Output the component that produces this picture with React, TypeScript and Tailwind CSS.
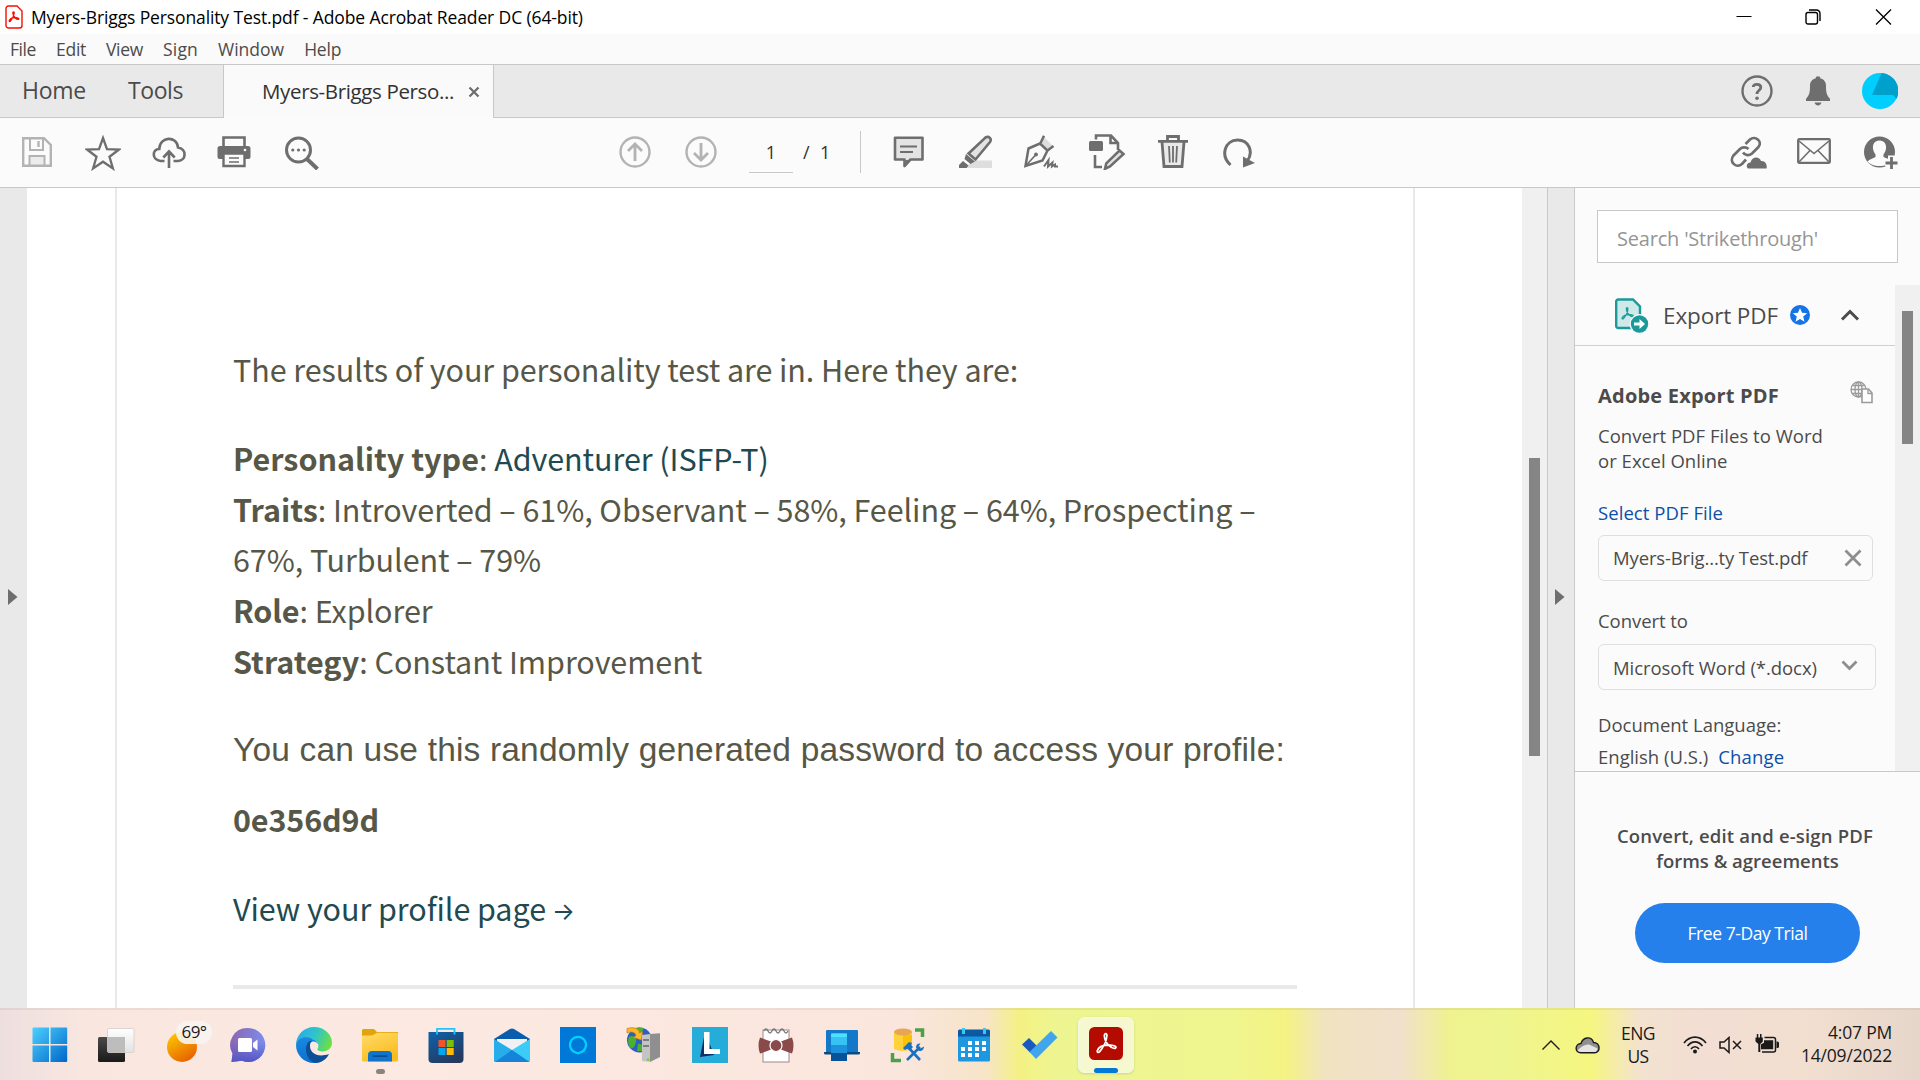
import type { ReactNode } from "react";

const D = "#6e6e6e";
const L = "#b3b3b3";

function T({ className = "", children }: { className?: string; children: ReactNode }) {
  return <span className={"whitespace-nowrap " + className}>{children}</span>;
}

function Slot({ children }: { children: ReactNode }) {
  return <div className="flex w-[66px] shrink-0 items-center justify-center">{children}</div>;
}

function Trefoil({ color, width }: { color: string; width: number }) {
  return (
    <path
      d="M2 19.500C4 14 10.500 13.200 16 13.500C21 13.800 23 15.500 21.500 16.800C18 18.500 10 12 9.500 3.500C9.500 0.500 12.500 0.500 12.300 3.500C12 9 8 16.500 4.500 20.500C3 22 1.300 21.500 2 19.500Z"
      fill="none"
      stroke={color}
      strokeWidth={width}
      strokeLinejoin="round"
    />
  );
}

function TitleBar() {
  return (
    <div className="flex h-[34px] items-center bg-white pl-[5px]">
      <svg width="18" height="24" viewBox="0 0 18 24">
        <path d="M3.500 1h8.500l5 5v14.500a2.500 2.500 0 0 1-2.500 2.500h-11a2.500 2.500 0 0 1-2.500-2.500v-17a2.500 2.500 0 0 1 2.500-2.500z" fill="#fff" stroke="#f40f02" strokeWidth="1.400" />
        <g transform="translate(3.300 6.200) scale(0.480)">
          <Trefoil color="#f40f02" width={2.8} />
        </g>
      </svg>
      <T className="ml-[8px] mt-[1px] text-[17.500px] tracking-[-0.120px] text-black">Myers-Briggs Personality Test.pdf - Adobe Acrobat Reader DC (64-bit)</T>
      <div className="ml-auto flex items-center pr-[28px] text-black">
        <svg width="16" height="16" viewBox="0 0 16 16"><path d="M0.500 7.500H15.500" stroke="currentColor" strokeWidth="1" /></svg>
        <svg className="ml-[53px]" width="16" height="16" viewBox="0 0 16 16" fill="none" stroke="currentColor" strokeWidth="1.400">
          <rect x="1" y="3.500" width="11.500" height="11.500" rx="2" />
          <path d="M4 1h7.500a3.500 3.500 0 0 1 3.500 3.500V12" />
        </svg>
        <svg className="ml-[54px]" width="17" height="16" viewBox="0 0 17 16"><path d="M1 0.500L16 15.500M16 0.500L1 15.500" stroke="currentColor" strokeWidth="1.300" /></svg>
      </div>
    </div>
  );
}

function MenuBar() {
  return (
    <div className="flex h-[31px] gap-[20px] border-b border-[#c8c8c8] bg-[#fafafa] pl-[10px] text-[17.500px] leading-[31px] text-[#4b4b4b]">
      <T className="tracking-[-0.430px]">File</T>
      <T className="tracking-[-0.270px]">Edit</T>
      <T className="tracking-[-0.310px]">View</T>
      <T className="tracking-[0.190px]">Sign</T>
      <T>Window</T>
      <T className="tracking-[-0.210px]">Help</T>
    </div>
  );
}

function TabBar() {
  return (
    <div className="flex h-[53px] bg-[#e9e9e9] text-[#4b4b4b]">
      <div className="flex w-[224px] items-center border-r border-b border-[#c8c8c8] pb-[2px] pl-[22px] text-[23px]">
        <T className="w-[106px] tracking-[-0.300px]">Home</T>
        <T className="tracking-[-0.420px]">Tools</T>
      </div>
      <div className="flex w-[269px] items-center bg-[#fafafa] pl-[38px] text-[#323232]">
        <T className="text-[20.500px] tracking-[-0.360px]">Myers-Briggs Perso...</T>
        <svg className="ml-[14px]" width="12" height="12" viewBox="0 0 12 12"><path d="M1.500 1.500L10.500 10.500M10.500 1.500L1.500 10.500" stroke={D} strokeWidth="2.300" /></svg>
      </div>
      <div className="flex flex-1 items-center justify-end border-b border-l border-[#c8c8c8] pr-[22px]">
        <svg width="32" height="32" viewBox="0 0 32 32" fill="none">
          <circle cx="16" cy="16" r="14.500" stroke={D} strokeWidth="2.400" />
          <path d="M12.200 12C12.500 8.500 19.800 8.300 19.800 12.500C19.800 15.300 16 15.300 16 19" stroke={D} strokeWidth="2.800" />
          <circle cx="16" cy="23.200" r="1.800" fill={D} />
        </svg>
        <svg className="ml-[32px]" width="26" height="30" viewBox="0 0 26 30" fill={D}>
          <path d="M10.800 2.200V1.500a1 1 0 0 1 1-1h2.400a1 1 0 0 1 1 1v0.700C19 3 21 6 21 9.500c0 7 .5 9.500 4 13.300V25H1v-2.200C4.500 19 5 16.500 5 9.500C5 6 7 3 10.800 2.200zM9.500 26.500h7c-.6 2-2 3-3.500 3s-2.900-1-3.500-3z" />
        </svg>
        <svg className="ml-[31px]" width="36" height="36" viewBox="0 0 36 36">
          <circle cx="18" cy="18" r="18" fill="#00ceff" />
          <path d="M19.500 0A18 18 0 0 1 34.500 26L31 22H10z" fill="#00a0cc" />
        </svg>
      </div>
    </div>
  );
}

function Toolbar() {
  return (
    <div className="flex h-[70px] border-b border-[#c8c8c8] bg-[#fbfbfb] pl-[4px]">
      <Slot>
        <svg className="mb-px" width="30" height="30" viewBox="0 0 30 30" fill="none" stroke={L}>
          <path d="M8 20h14v8H8z" fill="#ececec" stroke="none" />
          <path d="M1.200 1.200H22L28.800 8V28.800H1.200z" strokeWidth="2.400" />
          <path d="M8 1v12h13V1M7.500 29V19h15V29" strokeWidth="2" />
          <path d="M16.500 4v6" strokeWidth="2.400" />
        </svg>
      </Slot>
      <Slot>
        <svg width="36" height="36" viewBox="0 0 36 36" fill="none" stroke={D} strokeWidth="2.300">
          <path d="M18 3l4 11.200 12 .3-9.500 7.300 3.400 11.600L18 26.700l-9.900 6.700 3.400-11.600L2 14.500l12-.3z" />
        </svg>
      </Slot>
      <Slot>
        <svg width="34" height="32" viewBox="0 0 34 32" fill="none" stroke={D} strokeWidth="2.600">
          <path d="M12.500 24H8.500C-.5 23 0 12 7.300 12C7.500-1 25-1.500 26 10.500C35 12 34.500 23.500 26 24H21.500" />
          <path d="M17 31V15.500M11.300 20.500L17 14.500l5.700 6" />
        </svg>
      </Slot>
      <Slot>
        <svg className="mb-[2px] mr-[2px]" width="34" height="32" viewBox="0 0 34 32">
          <path d="M6.500 10V1.500h21V10" fill="none" stroke={D} strokeWidth="2.600" />
          <path d="M3 10h28a2.500 2.500 0 0 1 2.500 2.500V21a2 2 0 0 1-2 2H2.500a2 2 0 0 1-2-2v-8.500A2.500 2.500 0 0 1 3 10z" fill={D} />
          <circle cx="28" cy="14" r="1.300" fill="#fff" />
          <path d="M6.500 17.500h21V30h-21z" fill="#fbfbfb" stroke={D} strokeWidth="2.400" />
          <path d="M12 22h10M12 26h10" stroke={D} strokeWidth="1.600" />
        </svg>
      </Slot>
      <Slot>
        <svg className="ml-[2px]" width="34" height="34" viewBox="0 0 34 34">
          <circle cx="13.500" cy="14" r="12" fill="none" stroke={D} strokeWidth="3" />
          <path d="M22 23l10.500 10" stroke={D} strokeWidth="4" />
          <g fill={D}><circle cx="7.800" cy="14" r="1.600" /><circle cx="13.500" cy="14" r="1.600" /><circle cx="19.200" cy="14" r="1.600" /></g>
        </svg>
      </Slot>
      <div className="ml-[268px] flex pb-px">
        <Slot>
          <svg width="32" height="32" viewBox="0 0 32 32" fill="none" stroke={L} strokeWidth="2.400">
            <circle cx="16" cy="16" r="14.500" />
            <path d="M16 25V8.500M9 15l7-7 7 7" strokeWidth="2.800" />
          </svg>
        </Slot>
        <Slot>
          <svg width="32" height="32" viewBox="0 0 32 32" fill="none" stroke={L} strokeWidth="2.400">
            <circle cx="16" cy="16" r="14.500" />
            <path d="M16 7v16.500M9 17l7 7 7-7" strokeWidth="2.800" />
          </svg>
        </Slot>
      </div>
      <div className="ml-[15px] flex h-[55px] w-[44px] items-center justify-center border-b border-[#c8c8c8] pt-[14px] text-[18px] text-[#323232]">1</div>
      <div className="ml-[10px] flex items-center pb-px text-[18px] text-[#323232]">
        <span className="w-[17px]">/</span>
        <span>1</span>
      </div>
      <div className="ml-[30px] mt-[13px] h-[42px] w-px bg-[#c8c8c8]" />
      <div className="ml-[15px] flex pb-px">
        <Slot>
          <svg width="32" height="32" viewBox="0 0 32 32">
            <path d="M2 1.800h27.500V23.500H17.500L11.500 30V23.500H2z" fill="#e3e3e3" stroke={D} strokeWidth="2.600" strokeLinejoin="round" />
            <path d="M12.500 24h5l-6 7z" fill={D} />
            <path d="M7 10.500h17M7 16h13" stroke={D} strokeWidth="1.800" />
          </svg>
        </Slot>
        <Slot>
          <svg width="34" height="34" viewBox="0 0 34 34">
            <path d="M14 25.500h20V33H8z" fill="#dedede" />
            <path d="M27.500 2.500C31 .5 34 4 32 7L17.500 24.500l-7-6z" fill="#e3e3e3" stroke={D} strokeWidth="2.600" />
            <path d="M8 19l9 7.500-4.500 2.500-6-5zM5 26l5.500 4.500L8.500 33H1v-3z" fill={D} />
          </svg>
        </Slot>
        <Slot>
          <svg width="34" height="34" viewBox="0 0 34 34" fill="none" stroke={D} strokeWidth="2.500">
            <path d="M20 2l9 9-4 4-9-7z" fill="#dedede" stroke="none" />
            <path d="M20 .8L16.300 8.500M29.500 11l-6 4.500M16 8.500L4.500 13.500L1.500 31l17-5.500 5-10z" />
            <path d="M2 30.500l10-11" strokeWidth="1.700" /><circle cx="12" cy="19.500" r="1.900" fill={D} stroke="none" />
            <path d="M20 31.500L24.500 25l-.5 6.500 4.500-4-.5 4 3-2v2h3" strokeWidth="2" />
          </svg>
        </Slot>
        <Slot>
          <svg width="38" height="36" viewBox="0 0 38 36" fill="none" stroke={D} strokeWidth="2.600">
            <path d="M8 5.500V1.500h15l7 7.500v7M7 21v12h7M22.500 1.500v7.500h7.500" />
            <rect x="1" y="7" width="14" height="10" rx="1.500" fill={D} stroke="none" />
            <path d="M31.500 16.500l4 3.500L22 32.500l-5 2.300 1.300-5.500z" fill="#e3e3e3" />
          </svg>
        </Slot>
        <Slot>
          <svg width="32" height="34" viewBox="0 0 32 34" fill="none" stroke={D}>
            <path d="M5 7l2 24.500h18L27 7" fill="#e9e9e9" strokeWidth="2.800" />
            <path d="M1 6.300h30M10.500 6V1.500h11V6" strokeWidth="2.800" />
            <path d="M12 11l.8 16.500M16 11v16.500M20 11l-.8 16.500" strokeWidth="1.800" />
          </svg>
        </Slot>
        <Slot>
          <svg className="mt-px" width="34" height="30" viewBox="0 0 34 30">
            <path d="M8.500 27C-2 17.500 3 2 15.500 2C27 2 32 14 25 23.500" fill="none" stroke={D} strokeWidth="3" />
            <path d="M21 18.500v11l12-4.500z" fill={D} />
          </svg>
        </Slot>
      </div>
      <div className="ml-auto flex pr-[7px]">
        <Slot>
          <svg width="37" height="34" viewBox="0 0 37 34">
            <g fill="none" stroke={D} strokeWidth="2.700">
              <path d="M15.500 8L20 3.500C25-1 33 5.500 28.500 11L22 17.500C19 20 15 19.500 13 16.500" />
              <path d="M18.500 13C16 10.500 12 11 10 13L3.500 19.500C-1.500 25.500 6 33 12 28L16 23.500" />
            </g>
            <path d="M18 32.500c-2.500-2-1-6 2.500-6 1-6 9-7 10.500-1.500 4.500-.5 6.500 4 5.500 7.500z" fill={D} />
          </svg>
        </Slot>
        <Slot>
          <svg className="mb-[3px]" width="34" height="26" viewBox="0 0 34 26" fill="none" stroke={D}>
            <rect x="1.200" y="1.200" width="31.600" height="23.600" rx="1" strokeWidth="2.300" />
            <path d="M2 3l15 12.500L32 3M2 24l11-11.500M32 24L21 12.500" strokeWidth="1.600" />
          </svg>
        </Slot>
        <Slot>
          <svg width="35" height="33" viewBox="0 0 35 33">
            <circle cx="16.500" cy="16" r="15.500" fill={D} />
            <path d="M16.500 4.500c5 0 7 4 6.500 8-.4 3-1.500 4.500-2.500 6v2.500c3 1.500 6 2 8 4-2 3-6 5-12 5S7 28 4.500 25.500c2-2.500 5.500-3 8-4.500v-2.500c-1-1.500-2.100-3-2.500-6-.5-4 1.500-8 6.500-8z" fill="#fbfbfb" />
            <path d="M28.500 19.500v14M22 27h13" stroke="#fbfbfb" strokeWidth="7" />
            <path d="M28.500 21v12M22.500 27h12" stroke={D} strokeWidth="2.800" />
          </svg>
        </Slot>
      </div>
    </div>
  );
}

function Document() {
  return (
    <div className="flex min-w-0 flex-1">
      <div className="flex w-[27px] shrink-0 flex-col bg-[#e9e9e9] pt-[401px] pl-[8px]">
        <svg width="10" height="16" viewBox="0 0 10 16"><path d="M0 0l9.500 8L0 16z" fill={D} /></svg>
      </div>
      <div className="w-[1495px] shrink-0 bg-white pl-[88px]">
        <div className="flex h-full w-[1300px] flex-col border-x-2 border-[#e9e9e9] pl-[116px] pt-[156px] font-['Noto_Sans_CJK_SC',sans-serif] text-[30.500px] leading-[50.800px] tracking-[-0.070px] text-[#575748]">
          <p className="whitespace-nowrap">The results of your personality test are in. Here they are:</p>
          <div className="mt-[38px] tracking-[-0.060px]">
            <p className="whitespace-nowrap"><b className="tracking-normal">Personality type</b>: <span className="text-[#1f4a50]">Adventurer (ISFP-T)</span></p>
            <p className="whitespace-nowrap"><b className="tracking-normal">Traits</b>: Introverted – 61%, Observant – 58%, Feeling – 64%, Prospecting –</p>
            <p className="whitespace-nowrap">67%, Turbulent – 79%</p>
            <p className="whitespace-nowrap"><b className="tracking-[-0.100px]">Role</b>: Explorer</p>
            <p className="whitespace-nowrap"><b className="tracking-normal">Strategy</b>: Constant Improvement</p>
          </div>
          <p className="mt-[38px] whitespace-nowrap font-['Liberation_Sans',sans-serif] text-[33.500px] tracking-[0.180px]">You can use this randomly generated password to access your profile:</p>
          <p className="mt-[18px] font-bold tracking-[-0.120px]">0e356d9d</p>
          <p className="mt-[39px] flex h-[51px] items-start text-[#1f4a50]">
            <T>View your profile page</T>
            <span className="ml-[6px] mt-[4px] font-['Inter',sans-serif] text-[24px]">→</span>
          </p>
          <div className="mt-[51px] h-[4px] w-[1064px] shrink-0 bg-[#e9e9e9]" />
        </div>
      </div>
      <div className="w-[25px] bg-[#f0f0f0] pl-[7px] pt-[270px]">
        <div className="h-[298px] w-[11px] bg-[#858585]" />
      </div>
      <div className="w-[27px] shrink-0 border-l border-[#c8c8c8] bg-[#e9e9e9] pl-[7px] pt-[401px]">
        <svg width="10" height="16" viewBox="0 0 10 16"><path d="M0 0l9.500 8L0 16z" fill={D} /></svg>
      </div>
    </div>
  );
}

function SidePanel() {
  return (
    <aside className="flex w-[346px] shrink-0 flex-col border-l border-[#c8c8c8] bg-[#fbfbfb] text-[18.500px] text-[#4b4b4b]">
      <div className="ml-[22px] mt-[22px] flex h-[53px] w-[301px] shrink-0 items-center border border-[#c8c8c8] bg-white pl-[19px] pt-[4px] text-[20px] tracking-[-0.200px] text-[#959595]">
        Search 'Strikethrough'
      </div>
      <div className="mt-[22px] flex h-[486px] overflow-hidden">
        <div className="w-[320px] shrink-0">
          <div className="flex h-[61px] items-center border-b border-[#d0d0d0] pl-[40px]">
            <svg className="mt-[2px]" width="34" height="36" viewBox="0 0 34 36">
              <path d="M1.200 3.500a2 2 0 0 1 2-2H18L25 8.500V30H3.200a2 2 0 0 1-2-2z" fill="#cfe8e8" stroke="#1a9b99" strokeWidth="2.400" />
              <g transform="translate(6 9) scale(0.560)"><Trefoil color="#1a9b99" width={2.3} /></g>
              <circle cx="24.500" cy="26" r="10" fill="#fbfbfb" /><circle cx="24.500" cy="26" r="8.700" fill="#1a9b99" />
              <path d="M19 24.500h5.500V21l5.500 5-5.500 5v-3.500H19z" fill="#fff" />
            </svg>
            <T className="ml-[14px] mt-px text-[22.500px] tracking-[-0.110px]">Export PDF</T>
            <svg className="ml-[12px]" width="20" height="20" viewBox="0 0 20 20">
              <circle cx="10" cy="10" r="10" fill="#1473e6" />
              <path d="M10 3l2 4.800 5.200.4-4 3.400 1.300 5.100L10 14l-4.500 2.700 1.300-5.100-4-3.400L8 7.800z" fill="#fff" />
            </svg>
            <svg className="ml-[30px]" width="20" height="12" viewBox="0 0 20 12"><path d="M2 10.500L10 2.500l8 8" fill="none" stroke="#4b4b4b" strokeWidth="3" /></svg>
          </div>
          <div className="pl-[23px]">
            <div className="mt-[36px] flex h-[26px] items-center">
              <T className="mt-[2px] text-[20px] font-bold leading-[26px] tracking-[0.210px]">Adobe Export PDF</T>
              <svg className="mb-[6px] ml-[71px]" width="23" height="23" viewBox="0 0 23 23" fill="none" stroke="#9b9b9b" strokeWidth="1.300">
                <circle cx="8.500" cy="8.500" r="7.500" /><ellipse cx="8.500" cy="8.500" rx="3.500" ry="7.500" /><path d="M1 8.500h15M2.500 4.500h12M2.500 12.500h12M8.500 1v15" />
                <path d="M12 8h6.500l3.500 4v9.500H12z" fill="#fff" strokeWidth="1.600" /><path d="M18 8v4.500h4" />
              </svg>
            </div>
            <p className="mt-[15px] w-[240px] leading-[25px] tracking-[0.030px]">Convert PDF Files to Word<br />or Excel Online</p>
            <p className="mt-[27px] leading-[26px] tracking-[0.060px] text-[#0d4fa8]">Select PDF File</p>
            <div className="mt-[9px] flex h-[46px] w-[275px] items-center rounded-[6px] border border-[#dfdfdf] pl-[14px]">
              <T className="tracking-[-0.140px]">Myers-Brig...ty Test.pdf</T>
              <svg className="ml-[37px]" width="18" height="18" viewBox="0 0 18 18"><path d="M1.500 1.500l15 15M16.500 1.500l-15 15" stroke="#8e8e8e" strokeWidth="2.800" /></svg>
            </div>
            <p className="mt-[27px] leading-[26px] tracking-[-0.050px]">Convert to</p>
            <div className="mt-[10px] flex h-[46px] w-[278px] items-center rounded-[6px] border border-[#dfdfdf] pl-[14px]">
              <T className="mt-[2px] tracking-[-0.060px]">Microsoft Word (*.docx)</T>
              <svg className="mb-[3px] ml-[24px]" width="17" height="11" viewBox="0 0 17 11"><path d="M1.500 1.500l7 7 7-7" fill="none" stroke="#8e8e8e" strokeWidth="2.800" /></svg>
            </div>
            <p className="mt-[22px] leading-[26px]">Document Language:</p>
            <p className="mt-[6px] flex leading-[26px]"><T>English (U.S.)</T><T className="ml-[10px] tracking-[0.160px] text-[#0d4fa8]">Change</T></p>
          </div>
        </div>
        <div className="flex-1 bg-[#f0f0f0] pl-[7px] pt-[26px]"><div className="h-[133px] w-[11px] bg-[#858585]" /></div>
      </div>
      <div className="flex flex-1 flex-col border-t border-[#c8c8c8]">
        <div className="mt-[51px] flex flex-col items-center text-center font-semibold leading-[25px]">
          <T className="mr-[5px] tracking-[0.180px]">Convert, edit and e-sign PDF</T>
          <T>forms &amp; agreements</T>
        </div>
        <div className="ml-[60px] mt-[30px] flex h-[60px] w-[225px] items-center justify-center rounded-full bg-[#2680eb] text-[17.500px] tracking-[-0.440px] text-white">Free 7-Day Trial</div>
      </div>
    </aside>
  );
}

function TaskbarIcons() {
  return (
    <div className="flex">
      <Slot>
        <svg width="36" height="36" viewBox="0 0 36 36">
          <defs><linearGradient id="win" x1="0" y1="0" x2="1" y2="1"><stop offset="0" stopColor="#4cd0ff" /><stop offset="1" stopColor="#0067c8" /></linearGradient></defs>
          <path d="M1.500.5H17V17H.5V1.500a1 1 0 0 1 1-1zM18.500.5h15.700a1 1 0 0 1 1 1V17H18.500zM.5 18.500H17V35H1.500a1 1 0 0 1-1-1zM18.500 18.500h16.700V34a1 1 0 0 1-1 1H18.500z" fill="url(#win)" />
        </svg>
      </Slot>
      <Slot>
        <svg width="37" height="36" viewBox="0 0 37 36">
          <defs>
            <linearGradient id="tv" x1="0" y1="0" x2="0" y2="1"><stop offset="0" stopColor="#4a4a4a" /><stop offset="1" stopColor="#1a1a1a" /></linearGradient>
            <linearGradient id="tw" x1="0" y1="0" x2="0" y2="1"><stop offset="0" stopColor="#ffffff" /><stop offset="1" stopColor="#e2e2e2" /></linearGradient>
          </defs>
          <rect x="0" y="10" width="27" height="25" rx="1.500" fill="url(#tv)" />
          <rect x="9.500" y="1.500" width="26.500" height="24" rx="1.500" fill="url(#tw)" stroke="#d4cdca" strokeWidth="0.800" />
          <rect x="9.500" y="10" width="17.500" height="15" fill="#bdbdbd" />
        </svg>
      </Slot>
      <Slot>
        <div className="relative h-[43px] w-[36px]">
          <svg className="absolute left-[3px] top-[8px]" width="30" height="30" viewBox="0 0 30 30">
            <defs><linearGradient id="sun" x1="0.200" y1="0" x2="0.800" y2="1"><stop offset="0" stopColor="#fdc800" /><stop offset="1" stopColor="#e55a00" /></linearGradient></defs>
            <circle cx="15" cy="15" r="15" fill="url(#sun)" />
          </svg>
          <div className="absolute left-[12px] top-[-3px] flex h-[23px] w-[36px] items-center justify-center rounded-full bg-[#f8f4f2]/90 pb-[2px] text-[17px] tracking-[-0.600px] text-[#1a1a1a]">69°</div>
        </div>
      </Slot>
      <Slot>
        <svg width="36" height="36" viewBox="0 0 36 36">
          <defs>
            <linearGradient id="chat" x1="0" y1="0.300" x2="1" y2="0.500"><stop offset="0" stopColor="#8d66b0" /><stop offset="1" stopColor="#7b8ff0" /></linearGradient>
            <linearGradient id="chat2" x1="0" y1="0" x2="0" y2="1"><stop offset="0.400" stopColor="#5658c8" stopOpacity="0" /><stop offset="1" stopColor="#5455c4" /></linearGradient>
          </defs>
          <path d="M18 1a17 17 0 1 1-6 32.800L1.500 35l1-8.500A17 17 0 0 1 18 1z" fill="url(#chat)" />
          <path d="M18 1a17 17 0 1 1-6 32.800L1.500 35l1-8.500A17 17 0 0 1 18 1z" fill="url(#chat2)" />
          <rect x="8" y="11" width="14" height="14" rx="1.500" fill="#fff" /><path d="M23 16l4.500-3.500v11L23 20z" fill="#fff" />
        </svg>
      </Slot>
      <Slot>
        <svg width="36" height="36" viewBox="0 0 36 36">
          <defs>
            <linearGradient id="eg" x1="0" y1="0.300" x2="1" y2="0.600"><stop offset="0" stopColor="#2aa9f0" /><stop offset="0.500" stopColor="#2fc5c8" /><stop offset="1" stopColor="#6ee03f" /></linearGradient>
            <linearGradient id="eb" x1="0" y1="0" x2="0.300" y2="1"><stop offset="0" stopColor="#1a8be0" /><stop offset="1" stopColor="#0a70d0" /></linearGradient>
          </defs>
          <path d="M18 0C29 0 36 8 36 15.500C36 21 32 24.500 27 24.500C23.500 24.500 21 23.500 21.500 22C23 20 23 15 18 13C10 9 3 12 0 18C0 8 8 0 18 0z" fill="url(#eg)" />
          <path d="M0 18C2 10 11 8.500 17 12.500C21 14 22 17 21.800 17C20 13 13 13.500 13 20C13 28 21 32 32.500 28C29 33 24 36 18 36C8 36 0 28 0 18z" fill="url(#eb)" />
          <path d="M10 22C10 17 13 13.500 16 13.800C14.500 15 14 17 14 19C14 26 21.500 31 33 27C30 33 24.500 36 19 36C13 34 10 28 10 22z" fill="#0c4f96" />
        </svg>
      </Slot>
      <Slot>
        <div className="relative h-[36px] w-[36px]">
          <svg width="36" height="36" viewBox="0 0 36 36">
            <defs><linearGradient id="fold" x1="0" y1="0" x2="0.500" y2="1"><stop offset="0" stopColor="#ffdc6b" /><stop offset="1" stopColor="#fbbb1e" /></linearGradient></defs>
            <path d="M0 3.500A1.500 1.500 0 0 1 1.500 2H12l3 3h21v8H0z" fill="#e0a50a" />
            <path d="M12 7.500L15 5.800H35a1 1 0 0 1 1 1V33a1.500 1.500 0 0 1-1.500 1.500h-33A1.500 1.500 0 0 1 0 33V8.500h10z" fill="url(#fold)" />
            <path d="M6 34.500V28a4 4 0 0 1 4-4h16a4 4 0 0 1 4 4v6.500z" fill="#0f74cc" /><rect x="10.500" y="28.200" width="15" height="1.800" rx=".9" fill="#0a4c91" />
          </svg>
          <div className="absolute left-[14px] top-[42px] h-[5px] w-[9px] rounded-full bg-[#8b8380]" />
        </div>
      </Slot>
      <Slot>
        <svg width="36" height="36" viewBox="0 0 36 36">
          <defs><linearGradient id="st" x1="0" y1="0" x2="0.600" y2="1"><stop offset="0" stopColor="#0d63ad" /><stop offset="1" stopColor="#26395e" /></linearGradient></defs>
          <path d="M.5 5h35v27a4 4 0 0 1-4 4h-27a4 4 0 0 1-4-4z" fill="url(#st)" />
          <path d="M9 7.500V1.800h17.500v5.700" fill="none" stroke="#28c3f5" strokeWidth="1.800" />
          <path d="M10.500 13h7v7h-7z" fill="#f35325" /><path d="M18.700 13h7v7h-7z" fill="#81bc06" /><path d="M10.500 21h7v7h-7z" fill="#05a6f0" /><path d="M18.700 21h7v7h-7z" fill="#ffba08" />
        </svg>
      </Slot>
      <Slot>
        <svg width="36" height="34" viewBox="0 0 36 34">
          <path d="M0 11L16 1q2-1 4 0l16 10v5H0z" fill="#0b5cad" />
          <path d="M3 11h30v8L18 28 3 19z" fill="#f1f1f1" />
          <path d="M0 11l18 11v12H1.500A1.500 1.500 0 0 1 0 32.500z" fill="#27aeea" /><path d="M36 11L18 22v12h16.500a1.500 1.500 0 0 0 1.500-1.500z" fill="#3bcdf7" />
          <path d="M18 22l17 11.500q-.3.500-1 .5H1L18 22z" fill="#1583d8" />
        </svg>
      </Slot>
      <Slot>
        <svg width="36" height="36" viewBox="0 0 36 36"><rect width="36" height="36" fill="#0078d7" /><path d="M15.700 25.500a8 8 0 1 1 4.600 0l-2.300.8z" fill="none" stroke="#00d1ff" strokeWidth="2.200" /></svg>
      </Slot>
      <Slot>
        <svg width="36" height="36" viewBox="0 0 36 36">
          <circle cx="13.500" cy="13" r="12.500" fill="#2b5fc4" />
          <path d="M3 10c4-3 8 1 7 5s-3 7-5 6-4-7-2-11zM12 17c4-1 6 3 4 7h-5zM6 3c3-3 8-3 12-2l-3 5z" fill="#4bb02e" />
          <path d="M1 1.500c7-2 12 0 12.500 4.500l3-1.500-1 8.500-8-2.500 2.500-2C9.500 5 5 4 1 6z" fill="#fbb829" stroke="#c67d10" strokeWidth=".7" />
          <path d="M24 7l10-.8V30L24 35z" fill="#8f8f8f" /><path d="M16 8l8-1v28l-8-1z" fill="#c4c4c4" /><path d="M17 13h6M17 19h6" stroke="#666" strokeWidth="1.500" /><circle cx="22" cy="32.500" r="1.200" fill="#5ce000" />
        </svg>
      </Slot>
      <Slot>
        <svg width="36" height="36" viewBox="0 0 36 36"><rect width="36" height="36" fill="#26acd9" /><path d="M13 5L8 30l14-2z" fill="#0e2f63" /><path d="M12 5h5.500v17H28v5H12z" fill="#fff" /></svg>
      </Slot>
      <Slot>
        <svg width="36" height="36" viewBox="0 0 36 36">
          <rect x="5" y="3" width="26" height="32" fill="#fff" stroke="#9b8a8a" strokeWidth="1" />
          <path d="M6 4q2-4 4 0t4 0 4 0 4 0 4 0 4 0" fill="none" stroke="#777" strokeWidth="1.300" />
          <path d="M2 10.500q6 2 11 4v8q-5 2-11 4-3-8 0-16zM34 10.500q-6 2-11 4v8q5 2 11 4 3-8 0-16z" fill="#8b4a4a" /><circle cx="18" cy="18.500" r="6" fill="#8b4a4a" stroke="#fff" strokeWidth="1.200" />
        </svg>
      </Slot>
      <Slot>
        <svg width="36" height="36" viewBox="0 0 36 36">
          <rect x="2" y="3" width="32" height="23" rx="1" fill="#1478c9" /><path d="M0 25h36v1a1.500 1.500 0 0 1-1.500 1.500h-33A1.500 1.500 0 0 1 0 26z" fill="#0a4b82" />
          <rect x="7" y="6" width="16" height="28" rx="1" fill="#36c2f2" /><path d="M7 18h16v8H7z" fill="#1d92dc" /><path d="M7 26h16v8H7z" fill="#0a5298" /><path d="M7 7h16v3H7z" fill="#4fe0ff" />
        </svg>
      </Slot>
      <Slot>
        <svg width="36" height="36" viewBox="0 0 36 36">
          <path d="M4 5h18v17q-9 4-18 0z" fill="#fdd23a" /><path d="M13 8h9v12l-9 3z" fill="#fbc107" /><ellipse cx="13" cy="5" rx="9" ry="3.500" fill="#e9a553" />
          <path d="M25 3h7.500V10M2.500 26v7.500H11" fill="none" stroke="#4aa14a" strokeWidth="3.500" />
          <path d="M17 33l13-13M17 19l13 14" stroke="#1670c4" strokeWidth="2.600" />
          <path d="M13 21l6-6 3 1-1 2 2 2-3 3-2.500-1.500L15 23z" fill="#1670c4" />
          <path d="M26 20.500c0-3 2-4.500 4.500-4l-2 3 2 2 3.500-2c0 3-2 5-5 4.500z" fill="#1670c4" />
        </svg>
      </Slot>
      <Slot>
        <svg width="34" height="36" viewBox="0 0 34 36">
          <path d="M1 8h32v25a1.500 1.500 0 0 1-1.500 1.500h-29A1.500 1.500 0 0 1 1 33z" fill="#1c97e0" /><path d="M1 4a1.500 1.500 0 0 1 1.500-1.500h29A1.500 1.500 0 0 1 33 4v5.500H1z" fill="#0b59a3" />
          <path d="M5 1h3v6H5zM26 1h3v6h-3z" fill="#35c9f3" />
          <path d="M11 14h4v4h-4zM18 14h4v4h-4zM25 14h4v4h-4zM4 20h4v4H4zM11 20h4v4h-4zM18 20h4v4h-4zM25 20h4v4h-4zM4 26h4v4H4zM11 26h4v4h-4zM18 26h4v4h-4z" fill="#fff" />
        </svg>
      </Slot>
      <Slot>
        <svg width="36" height="30" viewBox="0 0 36 30"><path d="M0 14.500L7 8l8 8-6.500 7z" fill="#185abd" /><path d="M7.500 22L29 1l6.500 6.500L14 29z" fill="#41a5ee" /></svg>
      </Slot>
      <Slot>
        <div className="relative flex h-[56px] w-[56px] items-center justify-center rounded-[6px] border border-[#f6f9e2] bg-[#f6f9d0] shadow-sm">
          <svg className="mb-[3px]" width="34" height="33" viewBox="0 0 34 33"><rect width="34" height="33" rx="5.500" fill="#b30b00" /><g transform="translate(6.500 5.500) scale(0.930)"><Trefoil color="#fff" width={1.9} /></g></svg>
          <div className="absolute bottom-[-1px] left-[15px] h-[5px] w-[24px] rounded-full bg-[#0078d4]" />
        </div>
      </Slot>
    </div>
  );
}

function Taskbar() {
  return (
    <div className="flex h-[72px] items-center border-t-2 border-[#000]/5 bg-[linear-gradient(90deg,#eedfdf_0px,#f9e7df_90px,#fce9e1_400px,#fae6dd_900px,#f7e4c8_985px,#f4f183_1020px,#edf592_1060px,#eff58f_1230px,#f4f383_1285px,#f0e3c0_1325px,#f1e0cc_1400px,#eff28f_1450px,#eef490_1500px,#f5f680_1590px,#f3e2cf_1640px,#f2ded3_1700px,#f2dfd0_1800px,#e6d6ca_1920px)] pl-[17px] pr-[28px] text-[17.500px] leading-[23px] text-[#1a1a1a]">
      <TaskbarIcons />
      <div className="ml-auto flex items-center">
        <svg width="18" height="10" viewBox="0 0 18 10"><path d="M.5 9.500L9 1l8.500 8.500" fill="none" stroke="currentColor" strokeWidth="1.400" /></svg>
        <svg className="ml-[15px]" width="25" height="18" viewBox="0 0 25 18"><path d="M6 16.700C-1 16.500 0 7.500 6 7.500C8 .5 16.500 0 18.500 6.500C25.500 6.500 26 16.700 19.500 16.700z" fill="#909090" stroke="#1a1a1a" strokeWidth="1.400" /><path d="M2.500 14.500C6 10 12 8 14 8.500c3 1.500 6 2.500 8.500 4-.5 2.500-1.500 3.400-3 3.400H6c-1.500 0-3-.5-3.500-1.400z" fill="#e4e4e4" /></svg>
        <div className="ml-[21px] flex w-[34px] flex-col items-center"><T className="tracking-[-0.540px]">ENG</T><T className="tracking-[-0.680px]">US</T></div>
        <svg className="ml-[28px]" width="24" height="18" viewBox="0 0 24 18" fill="none" stroke="currentColor" strokeWidth="1.600"><path d="M1 7C7-.8 17-.8 23 7M4.500 10C9 4.500 15 4.500 19.500 10M8 13C10 10 14 10 16 13" /><circle cx="12" cy="15.500" r="2" fill="currentColor" stroke="none" /></svg>
        <svg className="ml-[12px]" width="23" height="18" viewBox="0 0 23 18" fill="none" stroke="currentColor" strokeWidth="1.500"><path d="M1 6h4l5-4.500v15L5 12H1zM14 5l8 8M22 5l-8 8" /></svg>
        <svg className="mb-[3px] ml-[13px]" width="24" height="19" viewBox="0 0 24 19"><path d="M9.500 3.500H18.500a2 2 0 0 1 2 2v10.500a2 2 0 0 1-2 2H7" fill="none" stroke="currentColor" strokeWidth="1.500" /><path d="M9 6.300h9.200v9H6v-5l3-1.500zM21.500 7.500h1q1.500 0 1.500 1.500v3.500q0 1.500-1.500 1.500h-1zM.5 3.500h1.300V0h1.500v3.500H5V0h1.500v3.500h1.300v4L5.300 10v8H3.300v-8L.5 7.500z" fill="currentColor" /></svg>
        <div className="ml-[21px] flex w-[92px] flex-col items-end pb-[2px]"><T className="tracking-[-0.210px]">4:07 PM</T><T className="tracking-[-0.180px]">14/09/2022</T></div>
      </div>
    </div>
  );
}

export default function App() {
  return (
    <div className="flex h-[1080px] w-[1920px] flex-col overflow-hidden bg-white font-['Open_Sans',sans-serif]">
      <TitleBar />
      <MenuBar />
      <TabBar />
      <Toolbar />
      <div className="flex min-h-0 flex-1">
        <Document />
        <SidePanel />
      </div>
      <Taskbar />
    </div>
  );
}
